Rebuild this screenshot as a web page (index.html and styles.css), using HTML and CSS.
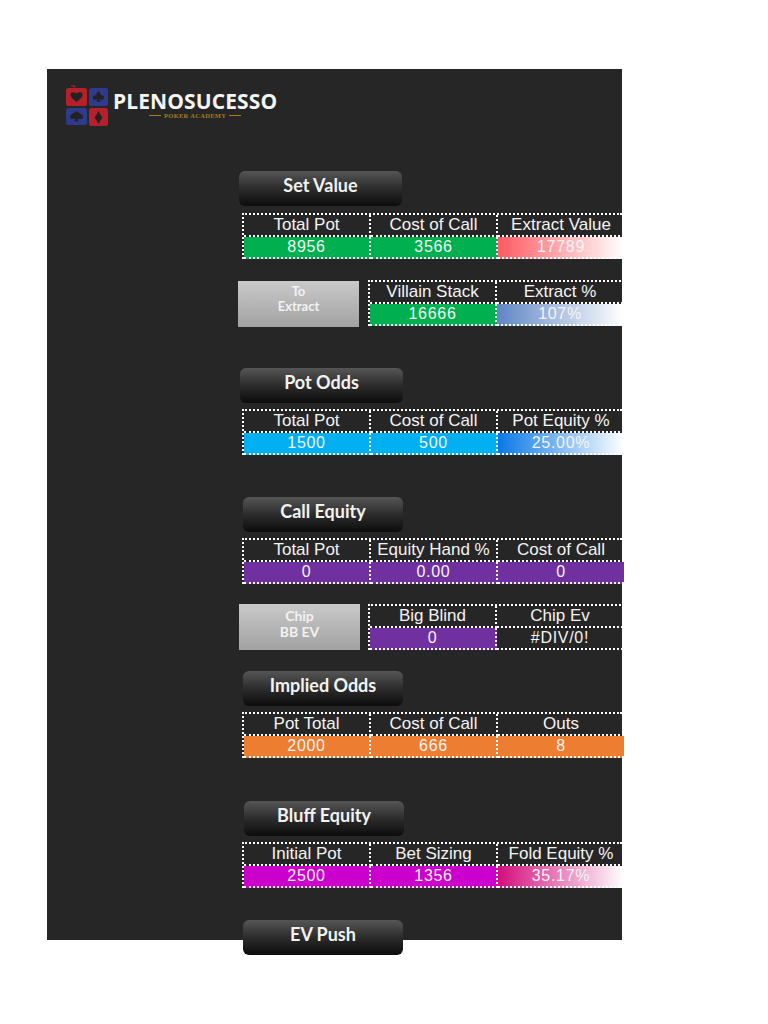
FILE: index.html
```html
<!DOCTYPE html>
<html lang="en">
<head>
<meta charset="utf-8">
<title>Plenosucesso Poker Academy</title>
<link rel="stylesheet" href="styles.css">
</head>
<body>
<main class="sheet">
  <header class="logo">
    <svg class="logo-icon" viewBox="0 0 44 42" width="44" height="42" aria-hidden="true">
      <path d="M6 0.5l4 1.5M8 0l3 2" stroke="#a5252c" stroke-width="1" fill="none"/>
      <rect x="1" y="3" width="21" height="18" rx="2.5" fill="#b5202b"/>
      <rect x="24" y="3" width="19" height="18" rx="2.5" fill="#2e3a8c"/>
      <rect x="1" y="23" width="21" height="17" rx="2.5" fill="#2e3a8c"/>
      <rect x="24" y="23" width="19" height="18" rx="2.5" fill="#b5202b"/>
      <path d="M11.5 17c-3-2.500-6-4.500-6-7.500 0-2 2.800-3.200 6-1 3.200-2.200 6-1 6 1 0 3-3 5-6 7.500z" fill="#222"/>
      <path d="M33.500 6c1.600 1.800 2.400 3 2.400 4.200 2.200-.4 3.600 1 3.300 2.700-.3 1.900-2.800 2.300-4.500 1 .1 1.200.6 2 1.200 2.800h-4.800c.6-.8 1.100-1.600 1.200-2.800-1.700 1.300-4.200.9-4.500-1-.3-1.700 1.100-3.100 3.300-2.700 0-1.200.8-2.400 2.400-4.200z" fill="#222"/>
      <path d="M11.500 26c2.500 2 6.500 3.500 6.500 6 0 2.200-3.500 2.800-5.500 1.200.1 1.300.6 2.200 1.400 3h-4.800c.8-.8 1.300-1.700 1.400-3-2 1.600-5.500 1-5.500-1.200 0-2.500 4-4 6.500-6z" fill="#222"/>
      <path d="M33.500 26c1.200 2.500 2.500 4.500 4 6.500-1.500 2-2.800 4-4 6.500-1.200-2.500-2.500-4.500-4-6.500 1.500-2 2.800-4 4-6.500z" fill="#222"/>
    </svg>
    <div class="logo-text">
      <div class="logo-name">PLENOSUCESSO</div>
      <div class="logo-sub"><span class="logo-rule"></span>POKER ACADEMY<span class="logo-rule"></span></div>
    </div>
  </header>

  <div class="title title-set">Set Value</div>
  <div class="calc calc-set">
    <div class="cell">Total Pot</div><div class="cell">Cost of Call</div><div class="cell">Extract Value</div>
    <div class="cell val green">8956</div><div class="cell val green">3566</div><div class="cell val grad-red">17789</div>
  </div>
  <div class="pair pair-extract">
    <div class="side side-extract">To<br>Extract</div>
    <div class="calc calc-two">
      <div class="cell">Villain Stack</div><div class="cell">Extract %</div>
      <div class="cell val green">16666</div><div class="cell val grad-steel">107%</div>
    </div>
  </div>

  <div class="title title-pot">Pot Odds</div>
  <div class="calc calc-near">
    <div class="cell">Total Pot</div><div class="cell">Cost of Call</div><div class="cell">Pot Equity %</div>
    <div class="cell val blue">1500</div><div class="cell val blue">500</div><div class="cell val grad-blue">25.00%</div>
  </div>

  <div class="title title-call">Call Equity</div>
  <div class="calc calc-near">
    <div class="cell">Total Pot</div><div class="cell">Equity Hand %</div><div class="cell">Cost of Call</div>
    <div class="cell val purple">0</div><div class="cell val purple">0.00</div><div class="cell val purple">0</div>
  </div>
  <div class="pair pair-chip">
    <div class="side side-chip">Chip<br>BB EV</div>
    <div class="calc calc-two">
      <div class="cell">Big Blind</div><div class="cell">Chip Ev</div>
      <div class="cell val purple">0</div><div class="cell val">#DIV/0!</div>
    </div>
  </div>

  <div class="title title-implied">Implied Odds</div>
  <div class="calc calc-near">
    <div class="cell">Pot Total</div><div class="cell">Cost of Call</div><div class="cell">Outs</div>
    <div class="cell val orange">2000</div><div class="cell val orange">666</div><div class="cell val orange">8</div>
  </div>

  <div class="title title-bluff">Bluff Equity</div>
  <div class="calc calc-near">
    <div class="cell">Initial Pot</div><div class="cell">Bet Sizing</div><div class="cell">Fold Equity %</div>
    <div class="cell val magenta">2500</div><div class="cell val magenta">1356</div><div class="cell val grad-pink">35.17%</div>
  </div>

  <div class="title title-push">EV Push</div>
</main>
</body>
</html>
```
FILE: styles.css
```css
* { box-sizing: border-box; }
html, body { margin: 0; padding: 0; background: #fff; }
body { height: 1024px; overflow: hidden; font-family: "Liberation Sans", Arial, sans-serif; padding: 69px 0 0 47px; }

.sheet {
  width: 575px;
  height: 871px;
  background: #262626;
  color: #fff;
  padding-top: 16px;
  display: flex;
  flex-direction: column;
  align-items: flex-start;
}

.logo { display: flex; margin-left: 18px; height: 42px; align-items: flex-start; }
.logo-icon { flex: none; }
.logo-text { margin-left: 4px; padding-top: 4px; }
.logo-name { font: 700 21px/24px "Open Sans", sans-serif; letter-spacing: 0.1px; color: #f4f4f4; }
.logo-sub {
  display: flex; align-items: center; justify-content: center; gap: 3px;
  font: 700 6.5px/7px "Liberation Serif", serif; letter-spacing: 0.3px; color: #a87a24;
  margin-top: -1px;
}
.logo-rule { width: 12px; height: 1px; background: #a87a24; }

.title {
  width: 160px;
  height: 35px;
  border-radius: 6px;
  background: linear-gradient(#565656, #2c2c2c 50%, #0c0c0c);
  font: 700 18px/29px Lato, sans-serif;
  text-align: center;
  color: #f2f2f2;
  flex: none;
}
.title-set { margin: 44px 0 0 192px; width: 163px; }
.title-pot { margin: 41px 0 0 193px; width: 163px; }
.title-call { margin: 42px 0 0 196px; }
.title-implied { margin: 21px 0 0 196px; }
.title-bluff { margin: 43px 0 0 197px; }
.title-push { margin: 32px 0 0 196px; }

.calc {
  display: grid;
  grid-template-columns: 127px 127px 126px;
  grid-auto-rows: 22px;
  width: 380px;
  height: 46px;
  flex: none;
  margin-left: 195px;
  border-top: 2px dotted #fff;
  border-left: 2px dotted #fff;
  background-clip: padding-box;
}
.calc-set { margin-top: 7px; }
.calc-near { margin-top: 6px; }
.calc-two { grid-template-columns: 127px 126px; width: 253px; margin: 0; }

.cell {
  font-size: 17px;
  line-height: 20px;
  text-align: center;
  white-space: nowrap;
  overflow: hidden;
  color: #f4f4f4;
  border-right: 2px dotted #fff;
  border-bottom: 2px dotted #fff;
}
.cell:nth-child(3n) { border-right: 0; }
.calc-two .cell:nth-child(3n) { border-right: 2px dotted #fff; }
.calc-two .cell:nth-child(2n) { border-right: 0; }

.val { font-size: 16px; letter-spacing: 0.7px; }
.green { background: #00b050; }
.blue { background: #00b0f0; }
.purple { background: #7030a0; }
.orange { background: #ed7d31; }
.magenta { background: #cc00cc; }
.grad-red { background: linear-gradient(90deg, #ff5a62, #fff); }
.grad-steel { background: linear-gradient(90deg, #5f86c4, #fff); }
.grad-blue { background: linear-gradient(90deg, #0a78e6, #fff); }
.grad-pink { background: linear-gradient(90deg, #d30f7c, #fff); }

.pair { display: flex; flex: none; align-items: flex-start; }
.pair-extract { margin: 21px 0 0 191px; }
.pair-chip { margin: 20px 0 0 192px; }

.side {
  width: 121px;
  height: 46px;
  margin-right: 9px;
  background: linear-gradient(#c9c9c9, #a2a2a2);
  font: 700 13px/15px Lato, sans-serif;
  text-align: center;
  color: #f2f2f2;
  padding-top: 3px;
  flex: none;
}
.side-extract { margin-top: 1px; }
.side-chip { font-size: 14px; line-height: 16px; padding-top: 4px; margin-right: 8px; }
```
